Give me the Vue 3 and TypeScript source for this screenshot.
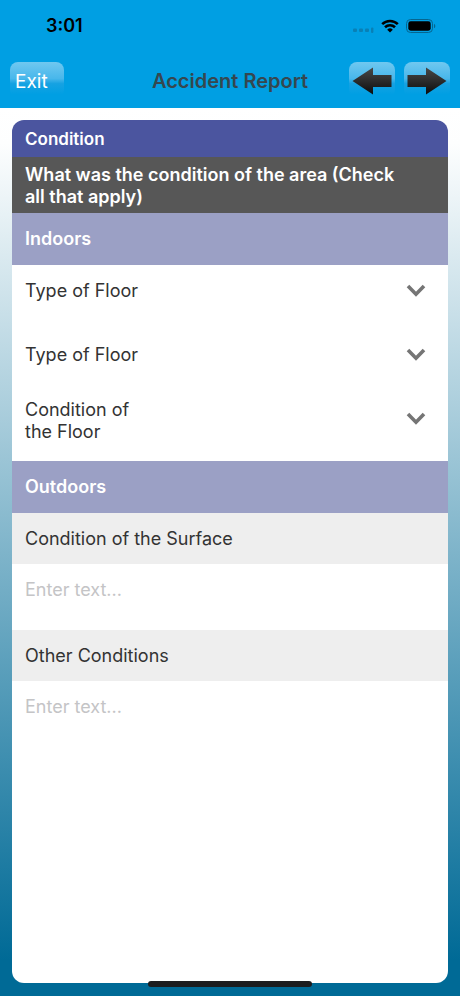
<script setup lang="ts">
import { reactive } from 'vue'

interface Field {
  id: string
  label: string
}

const indoorFields: Field[] = [
  { id: 'floor-type-primary', label: 'Type of Floor' },
  { id: 'floor-type-secondary', label: 'Type of Floor' },
  { id: 'floor-condition', label: 'Condition of the Floor' },
]

const outdoorFields: Field[] = [
  { id: 'surface-condition', label: 'Condition of the Surface' },
  { id: 'other-conditions', label: 'Other Conditions' },
]

const answers = reactive<Record<string, string>>({
  'floor-type-primary': '',
  'floor-type-secondary': '',
  'floor-condition': '',
  'surface-condition': '',
  'other-conditions': '',
})
</script>

<template>
  <div class="screen">
    <header class="top">
      <div class="status">
        <span class="time">3:01</span>
        <div class="indicators">
          <svg class="signal" width="21" height="6" viewBox="0 0 21 6" aria-hidden="true">
            <rect x="0" y="1.5" width="4" height="3.4" rx="1" />
            <rect x="6" y="1.5" width="4" height="3.4" rx="1" />
            <rect x="12" y="1.5" width="4" height="3.4" rx="1" />
            <rect x="18" y="0.5" width="2.4" height="5.5" rx="1" />
          </svg>
          <svg class="wifi" width="18" height="14" viewBox="0 0 18 14" aria-hidden="true">
            <path d="M1.2 5.1a11.2 11.2 0 0 1 15.6 0" />
            <path d="M4 8.2a7.2 7.2 0 0 1 10 0" />
            <path class="dot" d="M9 13.6 6.2 10.7a4 4 0 0 1 5.6 0Z" />
          </svg>
          <svg class="battery" width="30" height="14" viewBox="0 0 30 14" aria-hidden="true">
            <rect class="shell" x="0.5" y="0.5" width="26" height="13" rx="4" />
            <rect x="2.3" y="2.3" width="22.4" height="9.4" rx="2.4" />
            <path class="cap" d="M28 4.7c1.8.8 1.8 3.8 0 4.6Z" />
          </svg>
        </div>
      </div>
      <nav class="bar">
        <div class="side">
          <button class="glossy exit" type="button">Exit</button>
        </div>
        <h1 class="title">Accident Report</h1>
        <div class="side steps">
          <button class="glossy step" type="button" aria-label="Previous">
            <svg width="40" height="28" viewBox="0 0 40 28" aria-hidden="true">
              <defs>
                <linearGradient id="ink-back" x1="0" y1="0" x2="0" y2="1">
                  <stop offset="0" stop-color="#484848" />
                  <stop offset="0.5" stop-color="#2b2b2b" />
                  <stop offset="1" stop-color="#0c0c0c" />
                </linearGradient>
              </defs>
              <path fill="url(#ink-back)" d="M0.5 14 21 0.5V8H39.5V20H21V27.5Z" />
            </svg>
          </button>
          <button class="glossy step" type="button" aria-label="Next">
            <svg width="40" height="28" viewBox="0 0 40 28" aria-hidden="true">
              <defs>
                <linearGradient id="ink-next" x1="0" y1="0" x2="0" y2="1">
                  <stop offset="0" stop-color="#484848" />
                  <stop offset="0.5" stop-color="#2b2b2b" />
                  <stop offset="1" stop-color="#0c0c0c" />
                </linearGradient>
              </defs>
              <path fill="url(#ink-next)" d="M39.5 14 19 0.5V8H0.5V20H19V27.5Z" />
            </svg>
          </button>
        </div>
      </nav>
    </header>

    <main class="content">
      <form class="card" @submit.prevent>
        <h2 class="card-title">Condition</h2>
        <p class="question">What was the condition of the area (Check all that apply)</p>

        <h3 class="section">Indoors</h3>
        <div v-for="field in indoorFields" :key="field.id" class="pick">
          <label class="pick-label" :for="field.id"><span>{{ field.label }}</span></label>
          <div class="pick-control">
            <select :id="field.id" v-model="answers[field.id]">
              <option value=""></option>
            </select>
            <svg class="chevron" width="20" height="14" viewBox="0 0 20 14" aria-hidden="true">
              <path d="M2 2 10 10.2 18 2" />
            </svg>
          </div>
        </div>

        <h3 class="section">Outdoors</h3>
        <template v-for="field in outdoorFields" :key="field.id">
          <label class="text-label" :for="field.id">{{ field.label }}</label>
          <textarea
            :id="field.id"
            v-model="answers[field.id]"
            class="text-input"
            placeholder="Enter text..."
          ></textarea>
        </template>
      </form>
    </main>
    <div class="home-indicator"></div>
  </div>
</template>

<style>
body {
  margin: 0;
}
</style>

<style scoped>
.screen {
  position: relative;
  display: flex;
  flex-direction: column;
  min-height: 100vh;
  box-sizing: border-box;
  font-family: Inter, "Liberation Sans", sans-serif;
  font-size: 18px;
  line-height: 22px;
  color: #333;
}

.screen *,
.screen *::before {
  box-sizing: border-box;
}

.top {
  background: #009fe3;
}

.status {
  display: flex;
  align-items: center;
  justify-content: space-between;
  height: 52px;
  padding: 0 24px 0 46px;
}

.time {
  font-weight: 600;
  color: #000;
}

.indicators {
  display: flex;
  align-items: center;
  gap: 7px;
}

.signal {
  fill: #0880b6;
  margin-top: 8px;
}

.wifi {
  fill: none;
  stroke: #000;
  stroke-width: 2.6;
}

.wifi .dot {
  fill: #000;
  stroke: none;
}

.battery .shell {
  fill: none;
  stroke: #05658f;
}

.battery .cap {
  fill: #05658f;
}

.bar {
  display: grid;
  grid-template-columns: 1fr auto 1fr;
  align-items: center;
  height: 56px;
  padding: 0 10px;
}

.side {
  display: flex;
  gap: 9px;
}

.steps {
  justify-content: flex-end;
}

.title {
  margin: 0;
  padding-top: 2px;
  font-size: 20px;
  font-weight: 600;
  color: #36474f;
}

.glossy {
  display: flex;
  align-items: center;
  height: 36px;
  padding: 3px 5px 0;
  border: 0;
  border-radius: 8px;
  background: linear-gradient(#70c8f0 0%, #48b7eb 46%, #16a2e2 60%, #009fe3 90%);
  font: inherit;
  font-size: 19px;
  color: #fff;
}

.exit {
  width: 54px;
}

.step {
  justify-content: center;
  width: 46px;
  padding: 2px 0 0;
}

.step svg {
  flex: none;
}

.content {
  display: flex;
  flex: 1;
  padding: 12px 12px 13px;
  background: linear-gradient(#fff 0%, #fdfefe 4%, #006a96 96%);
}

.card {
  display: flex;
  flex: 1;
  flex-direction: column;
  overflow: hidden;
  border-radius: 12px;
  background: #fff;
}

.card-title,
.section,
.question {
  margin: 0;
  font-size: 18px;
  font-weight: 600;
  color: #fff;
}

.card-title {
  padding: 8px 13px 7px;
  font-size: 17px;
  background: #4b559f;
}

.question {
  padding: 7px 40px 5px 13px;
  background: #575757;
}

.section {
  padding: 15px 13px;
  background: #9ba0c5;
}

.pick {
  display: flex;
  justify-content: space-between;
  padding: 0 13px 12px;
}

.pick-label {
  display: flex;
  align-items: center;
  width: 120px;
  min-height: 52px;
  padding: 6px 0;
}

.pick-control {
  display: grid;
  flex: 1;
  height: 52px;
  align-items: center;
  justify-items: end;
}

.pick-control select,
.chevron {
  grid-area: 1 / 1;
}

.pick-control select {
  width: 100%;
  height: 44px;
  border: 0;
  appearance: none;
  background: transparent;
  font: inherit;
  color: inherit;
}

.chevron {
  margin-right: 9px;
  fill: none;
  stroke: #757575;
  stroke-width: 3.6;
  pointer-events: none;
}

.text-label {
  padding: 15px 13px 14px;
  background: #eee;
}

.text-input {
  display: block;
  height: 66px;
  padding: 15px 13px;
  border: 0;
  resize: none;
  background: transparent;
  font: inherit;
  color: inherit;
}

.text-input::placeholder {
  color: #c4c4c6;
  opacity: 1;
}

.home-indicator {
  position: absolute;
  bottom: 9px;
  left: 50%;
  width: 164px;
  height: 6px;
  margin-left: -82px;
  border-radius: 3px;
  background: #1c1c1e;
}
</style>
